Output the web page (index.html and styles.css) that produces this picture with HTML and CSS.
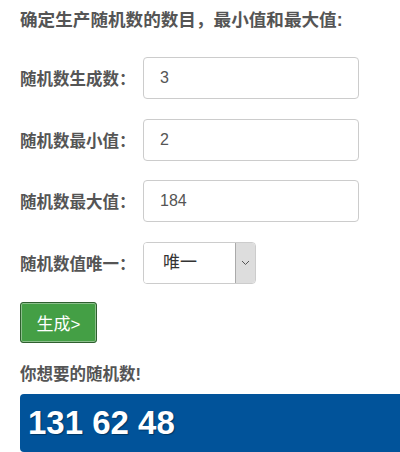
FILE: index.html
```html
<!DOCTYPE html>
<html lang="zh-CN">
<head>
  <meta charset="UTF-8">
  <meta name="viewport" content="width=device-width, initial-scale=1.0">
  <title>随机数生成器</title>
  <link rel="stylesheet" href="styles.css">
</head>
<body>
  <div class="page">
    <h1 class="page-title">确定生产随机数的数目，最小值和最大值:</h1>

    <form id="rand-form">
      <div class="form-row">
        <label for="count" class="form-label">随机数生成数：</label>
        <input type="text" id="count" class="form-control" value="3">
      </div>

      <div class="form-row">
        <label for="min" class="form-label">随机数最小值：</label>
        <input type="text" id="min" class="form-control" value="2">
      </div>

      <div class="form-row">
        <label for="max" class="form-label">随机数最大值：</label>
        <input type="text" id="max" class="form-control" value="184">
      </div>

      <div class="form-row">
        <label for="unique" class="form-label">随机数值唯一：</label>
        <div class="select-box">
          <select id="unique" class="select-control">
            <option>唯一</option>
            <option>不唯一</option>
          </select>
          <span class="select-arrow">
            <svg width="9" height="6" viewBox="0 0 9 6"><path d="M1 1l3.5 3.5L8 1" fill="none" stroke="#555" stroke-width="1"/></svg>
          </span>
        </div>
      </div>

      <button type="submit" class="btn">生成&gt;</button>
    </form>

    <h2 class="result-title">你想要的随机数!</h2>
    <div class="result-box" id="result">131 62 48</div>
  </div>
</body>
</html>
```

FILE: styles.css
```css
:root {
  --text-color: #555;
  --border-color: #ccc;
  --btn-color: #449f45;
  --result-color: #01539a;
}

* {
  box-sizing: border-box;
  margin: 0;
  padding: 0;
}

body {
  font-family: 'Liberation Sans', Arial, 'Noto Sans CJK SC', sans-serif;
  color: var(--text-color);
  background-color: #fff;
  overflow: hidden;
}

.page {
  padding: 8px 0 0 20px;
}

.page-title {
  font-size: 17.6px;
  font-weight: 700;
  line-height: 24px;
  margin-bottom: 25px;
}

.form-row {
  display: flex;
  align-items: center;
  height: 42px;
  margin-bottom: 19.5px;
}

.form-label {
  width: 123px;
  font-size: 16.5px;
  font-weight: 700;
}

.form-control {
  width: 216px;
  height: 42px;
  padding: 0 16px;
  border: 1px solid var(--border-color);
  border-radius: 4px;
  font-family: inherit;
  font-size: 16px;
  color: var(--text-color);
  outline: none;
}

.select-box {
  display: flex;
  width: 113px;
  height: 42px;
  border: 1px solid var(--border-color);
  border-radius: 4px;
  overflow: hidden;
}

.select-control {
  flex: 1;
  appearance: none;
  -webkit-appearance: none;
  border: none;
  background: #fff;
  padding-left: 19px;
  font-family: inherit;
  font-size: 17px;
  color: #333;
  outline: none;
}

.select-arrow {
  width: 20px;
  display: flex;
  align-items: center;
  justify-content: center;
  background-color: #ddd;
  border-left: 1px solid #aaa;
}

.btn {
  display: block;
  width: 77px;
  height: 41px;
  margin-top: -1px;
  background-color: var(--btn-color);
  border: 1px solid #2f5f2f;
  box-shadow: inset 0 0 0 1px #8cbf8c;
  border-radius: 3px;
  color: #fff;
  font-family: inherit;
  font-size: 17px;
  cursor: pointer;
}

.result-title {
  margin-top: 18.5px;
  font-size: 16.5px;
  font-weight: 700;
  line-height: 24px;
}

.result-box {
  margin-top: 8.5px;
  height: 58px;
  padding-left: 8px;
  background-color: var(--result-color);
  border-radius: 4px 0 0 4px;
  color: #fff;
  font-size: 33px;
  font-weight: 700;
  line-height: 58px;
  text-shadow: 1px 1px 1px rgba(0, 0, 0, 0.35);
}
```
